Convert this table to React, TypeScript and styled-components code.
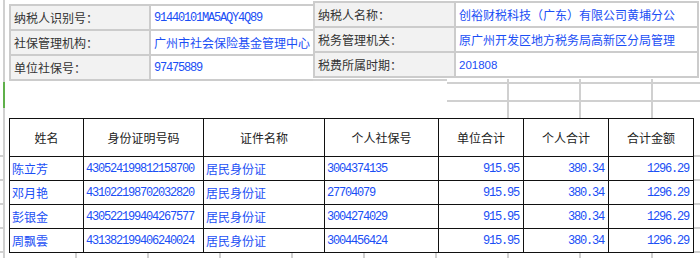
import React from 'react'
import { createGlobalStyle, styled } from 'styled-components'

const GlobalStyles = createGlobalStyle`
  html, body {
    margin: 0;
    padding: 0;
    background: #fff;
  }
  body {
    font-family: "Noto Sans CJK SC", "Noto Sans", sans-serif;
    font-size: 12px;
  }
`

const GRID = '#d0d0d0'

// the spreadsheet's own cell grid that shows around the pasted blocks
const Sheet = styled.div`
  width: 700px;
  height: 258px;
  box-sizing: border-box;
  padding-left: 9px;
  overflow: hidden;
  background-color: #fff;
  background-repeat: no-repeat;
  background-image:
    linear-gradient(#5fb04a, #5fb04a),
    linear-gradient(${GRID}, ${GRID}),
    repeating-linear-gradient(to right, transparent 0 3px, ${GRID} 3px 5px, transparent 5px 72px),
    linear-gradient(${GRID}, ${GRID}),
    linear-gradient(${GRID}, ${GRID}),
    linear-gradient(${GRID}, ${GRID}),
    repeating-linear-gradient(to right, transparent 0 60px, ${GRID} 60px 62px, transparent 62px 72px),
    repeating-linear-gradient(to bottom, ${GRID} 0 2px, transparent 2px 24px),
    repeating-linear-gradient(to bottom, ${GRID} 0 2px, transparent 2px 24px);
  background-position:
    3px 82px,
    3px 0,
    0 253px,
    313px 79px,
    447px 82px,
    447px 100px,
    447px 79px,
    694px 155px,
    0 155px;
  background-size:
    2px 26px,
    2px 100%,
    100% 5px,
    134px 2px,
    253px 2px,
    253px 2px,
    253px 39px,
    6px 98px,
    3px 98px;
`

const TopRow = styled.div`
  display: flex;
  align-items: flex-start;
`

const InfoPanel = styled.div<{ $top: number; $cols: string; $right: boolean }>`
  display: grid;
  grid-template-columns: ${p => p.$cols};
  grid-auto-rows: 23px;
  gap: 2px;
  margin-top: ${p => p.$top}px;
  padding: 2px ${p => (p.$right ? 2 : 0)}px 2px 2px;
  background: #cccccc;
`

const Label = styled.div`
  display: flex;
  align-items: center;
  padding-left: 3px;
  background: #f2f2f2;
  color: #333;
  white-space: nowrap;
`

const Value = styled.div<{ $mono?: boolean; $clip?: number }>`
  display: flex;
  align-items: center;
  padding-left: 3px;
  padding-right: ${p => p.$clip ?? 0}px;
  background: #fff;
  color: #1a4ef5;
  white-space: nowrap;
  overflow: hidden;
  font-family: ${p =>
    p.$mono ? '"Liberation Mono", monospace' : '"Noto Sans CJK SC", sans-serif'};
  letter-spacing: ${p => (p.$mono ? '-1.2px' : '0')};
`

const Clip = styled.span`
  display: block;
  overflow: hidden;
  width: 100%;
`

const Plain = styled.span`
  font-family: "Liberation Sans", Arial, sans-serif;
  font-size: 11.5px;
`

const Table = styled.div`
  display: grid;
  grid-template-columns: 73px 119px 120px 113px 84px 84px 84px;
  grid-template-rows: 37px repeat(4, 23px);
  gap: 1px;
  width: max-content;
  margin-top: 37px;
  padding: 1px;
  background: #111;
`

const HeadCell = styled.div`
  display: flex;
  align-items: center;
  justify-content: center;
  background: #fff;
  color: #222;
  font-size: 12px;
`

const Cell = styled.div<{ $num?: boolean; $align?: 'left' | 'right' }>`
  display: flex;
  align-items: center;
  justify-content: ${p => (p.$align === 'right' ? 'flex-end' : 'flex-start')};
  padding: ${p => (p.$align === 'right' ? '0 4px 0 0' : '0 0 0 2px')};
  background: #fff;
  color: #1a4ef5;
  white-space: nowrap;
  overflow: hidden;
  font-family: ${p =>
    p.$num ? '"Liberation Mono", monospace' : '"Noto Sans CJK SC", sans-serif'};
  letter-spacing: ${p => (p.$num ? '-1.2px' : '0')};
`

const heads = ['姓名', '身份证明号码', '证件名称', '个人社保号', '单位合计', '个人合计', '合计金额']

const people = [
  { name: '陈立芳', id: '430524199812158700', sb: '3004374135' },
  { name: '邓月艳', id: '431022198702032820', sb: '27704079' },
  { name: '彭银金', id: '430522199404267577', sb: '3004274029' },
  { name: '周飘雲', id: '431382199406240024', sb: '3004456424' },
]

const App = () => {
  return (
    <>
      <GlobalStyles />
      <Sheet>
        <TopRow>
          <InfoPanel $top={4} $cols="138px 162px" $right={false}>
            <Label>纳税人识别号：</Label>
            <Value $mono>91440101MA5AQY4Q89</Value>
            <Label>社保管理机构：</Label>
            <Value>广州市社会保险基金管理中心</Value>
            <Label>单位社保号：</Label>
            <Value $mono>97475889</Value>
          </InfoPanel>
          <InfoPanel $top={1} $cols="139px 241px" $right>
            <Label>纳税人名称：</Label>
            <Value $clip={21}>
              <Clip>创裕财税科技（广东）有限公司黄埔分公司</Clip>
            </Value>
            <Label>税务管理机关：</Label>
            <Value $clip={21}>
              <Clip>原广州开发区地方税务局高新区分局管理</Clip>
            </Value>
            <Label>税费所属时期：</Label>
            <Value>
              <Plain>201808</Plain>
            </Value>
          </InfoPanel>
        </TopRow>
        <Table>
          {heads.map(h => (
            <HeadCell key={h}>{h}</HeadCell>
          ))}
          {people.map(p => (
            <React.Fragment key={p.id}>
              <Cell>{p.name}</Cell>
              <Cell $num>{p.id}</Cell>
              <Cell>居民身份证</Cell>
              <Cell $num>{p.sb}</Cell>
              <Cell $num $align="right">915.95</Cell>
              <Cell $num $align="right">380.34</Cell>
              <Cell $num $align="right">1296.29</Cell>
            </React.Fragment>
          ))}
        </Table>
      </Sheet>
    </>
  )
}

export default App
